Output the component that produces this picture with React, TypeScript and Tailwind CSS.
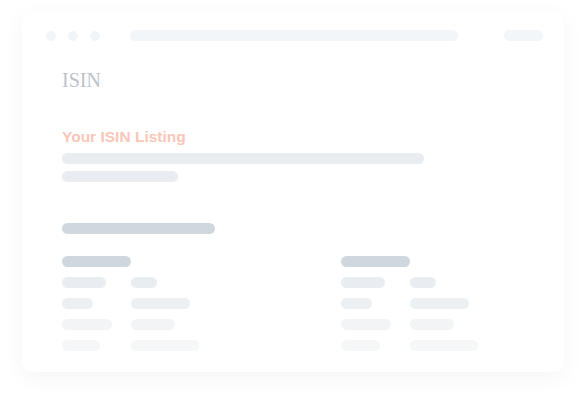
import React from "react";

const Bar = ({ w, c, h = "h-[11px]" }: { w: string; c: string; h?: string }) => (
  <div className={`${w} ${h} ${c} rounded-full`} />
);

type Row = [string, string];

const Column = ({ rows }: { rows: Row[] }) => {
  const colors = ["bg-[#e9edf1]", "bg-[#ecf0f3]", "bg-[#f2f4f6]", "bg-[#f6f7f9]"];
  return (
    <div className="flex flex-col">
      <div className="w-[69px] h-[11px] rounded-full bg-[#cfd7df]" />
      <div className="flex flex-col gap-[10px] mt-[10px]">
        {rows.map((r, i) => (
          <div key={i} className="flex h-[11px]">
            <div className="w-[69px]">
              <div className={`h-[11px] rounded-full ${colors[i]}`} style={{ width: r[0] }} />
            </div>
            <div className={`h-[11px] rounded-full ${colors[i]}`} style={{ width: r[1] }} />
          </div>
        ))}
      </div>
    </div>
  );
};

export default function App() {
  return (
    <div className="w-[588px] h-[408px] bg-white overflow-hidden" style={{ fontFamily: '"Liberation Sans", Arial, sans-serif' }}>
      <div className="ml-[22px] mt-[12px] w-[542px] h-[360px] rounded-[10px] bg-white shadow-[0_6px_24px_rgba(15,23,42,0.045)] flex flex-col">
        <div className="flex items-center pl-[24px] pr-[21px] pt-[18px]">
          <div className="flex gap-[12px]">
            <div className="w-[10px] h-[10px] rounded-full bg-[#f1f5f7]" />
            <div className="w-[10px] h-[10px] rounded-full bg-[#f1f5f7]" />
            <div className="w-[10px] h-[10px] rounded-full bg-[#f1f5f7]" />
          </div>
          <div className="ml-[30px] w-[328px] h-[11px] rounded-full bg-[#f2f6f8]" />
          <div className="ml-auto w-[39px] h-[11px] rounded-full bg-[#f2f6f8]" />
        </div>
        <div className="pl-[40px] flex flex-col">
          <div className="mt-[27px] text-[20px] leading-[24px] text-[#bcc2cc]" style={{ fontFamily: '"Liberation Serif", "Times New Roman", serif' }}>
            ISIN
          </div>
          <div className="mt-[36px] text-[15.5px] leading-[18px] font-bold text-[#fbc6b7]">Your ISIN Listing</div>
          <div className="mt-[7px] flex flex-col gap-[7px]">
            <Bar w="w-[362px]" c="bg-[#e9edf1]" />
            <Bar w="w-[116px]" c="bg-[#e9edf1]" />
          </div>
          <div className="mt-[41px]">
            <Bar w="w-[153px]" c="bg-[#cfd7df]" />
          </div>
          <div className="mt-[22px] flex">
            <div className="w-[279px]">
              <Column rows={[["44px", "26px"], ["31px", "59px"], ["50px", "44px"], ["38px", "68px"]]} />
            </div>
            <Column rows={[["44px", "26px"], ["31px", "59px"], ["50px", "44px"], ["39px", "68px"]]} />
          </div>
        </div>
      </div>
    </div>
  );
}
